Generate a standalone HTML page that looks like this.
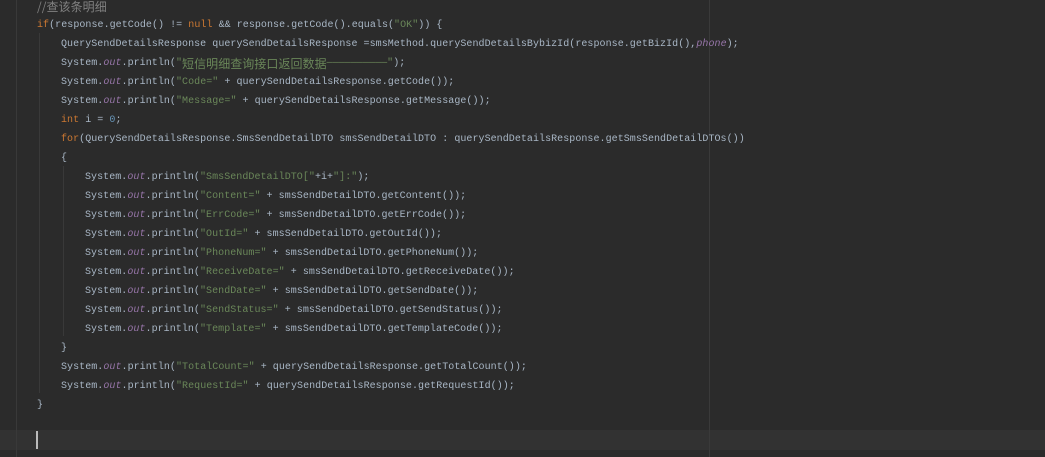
<!DOCTYPE html>
<html><head><meta charset="utf-8"><style>
html,body{margin:0;padding:0;background:#2b2b2b;width:1045px;height:457px;overflow:hidden;position:relative}
.l{position:absolute;left:0;white-space:pre;font-family:"Liberation Mono","Noto Sans CJK SC",monospace;font-size:10px;letter-spacing:0.05px;color:#a9b7c6;height:19px;line-height:19px}
.k{color:#cc7832}.s{color:#6a8759}.o{color:#9876aa;font-style:italic}.n{color:#6897bb}.c{color:#808080}
.z{font-family:"Noto Sans CJK SC",sans-serif;font-size:12px;display:inline-block;vertical-align:top;height:19px;line-height:19px}
.g{position:absolute;width:1px;background:#393939}
</style></head><body>
<div style="position:absolute;left:0;top:430px;width:1045px;height:20px;background:#323232"></div>
<div class="g" style="left:16px;top:0;height:457px"></div>
<div class="g" style="left:39px;top:33px;height:360px"></div>
<div class="g" style="left:63px;top:166px;height:170px"></div>
<div class="g" style="left:709px;top:0;height:457px;background:#3a3a3a"></div>
<div style="position:absolute;left:36px;top:431px;width:2px;height:18px;background:#bbb"></div>
<div class="l" style="top:-3px;left:37px"><span class="c z">//查该条明细</span></div>
<div class="l" style="top:16px;left:37px"><span class="k">if</span>(response.getCode() != <span class="k">null</span> &amp;&amp; response.getCode().equals(<span class="s">"OK"</span>)) {</div>
<div class="l" style="top:35px;left:61px">QuerySendDetailsResponse querySendDetailsResponse =smsMethod.querySendDetailsBybizId(response.getBizId(),<span class="o">phone</span>);</div>
<div class="l" style="top:54px;left:61px">System.<span class="o">out</span>.println(<span class="s">"<span class="z">短信明细查询接口返回数据</span>——————————"</span>);</div>
<div class="l" style="top:73px;left:61px">System.<span class="o">out</span>.println(<span class="s">"Code="</span> + querySendDetailsResponse.getCode());</div>
<div class="l" style="top:92px;left:61px">System.<span class="o">out</span>.println(<span class="s">"Message="</span> + querySendDetailsResponse.getMessage());</div>
<div class="l" style="top:111px;left:61px"><span class="k">int</span> i = <span class="n">0</span>;</div>
<div class="l" style="top:130px;left:61px"><span class="k">for</span>(QuerySendDetailsResponse.SmsSendDetailDTO smsSendDetailDTO : querySendDetailsResponse.getSmsSendDetailDTOs())</div>
<div class="l" style="top:149px;left:61px">{</div>
<div class="l" style="top:168px;left:85px">System.<span class="o">out</span>.println(<span class="s">"SmsSendDetailDTO["</span>+i+<span class="s">"]:"</span>);</div>
<div class="l" style="top:187px;left:85px">System.<span class="o">out</span>.println(<span class="s">"Content="</span> + smsSendDetailDTO.getContent());</div>
<div class="l" style="top:206px;left:85px">System.<span class="o">out</span>.println(<span class="s">"ErrCode="</span> + smsSendDetailDTO.getErrCode());</div>
<div class="l" style="top:225px;left:85px">System.<span class="o">out</span>.println(<span class="s">"OutId="</span> + smsSendDetailDTO.getOutId());</div>
<div class="l" style="top:244px;left:85px">System.<span class="o">out</span>.println(<span class="s">"PhoneNum="</span> + smsSendDetailDTO.getPhoneNum());</div>
<div class="l" style="top:263px;left:85px">System.<span class="o">out</span>.println(<span class="s">"ReceiveDate="</span> + smsSendDetailDTO.getReceiveDate());</div>
<div class="l" style="top:282px;left:85px">System.<span class="o">out</span>.println(<span class="s">"SendDate="</span> + smsSendDetailDTO.getSendDate());</div>
<div class="l" style="top:301px;left:85px">System.<span class="o">out</span>.println(<span class="s">"SendStatus="</span> + smsSendDetailDTO.getSendStatus());</div>
<div class="l" style="top:320px;left:85px">System.<span class="o">out</span>.println(<span class="s">"Template="</span> + smsSendDetailDTO.getTemplateCode());</div>
<div class="l" style="top:339px;left:61px">}</div>
<div class="l" style="top:358px;left:61px">System.<span class="o">out</span>.println(<span class="s">"TotalCount="</span> + querySendDetailsResponse.getTotalCount());</div>
<div class="l" style="top:377px;left:61px">System.<span class="o">out</span>.println(<span class="s">"RequestId="</span> + querySendDetailsResponse.getRequestId());</div>
<div class="l" style="top:396px;left:37px">}</div>
</body></html>
